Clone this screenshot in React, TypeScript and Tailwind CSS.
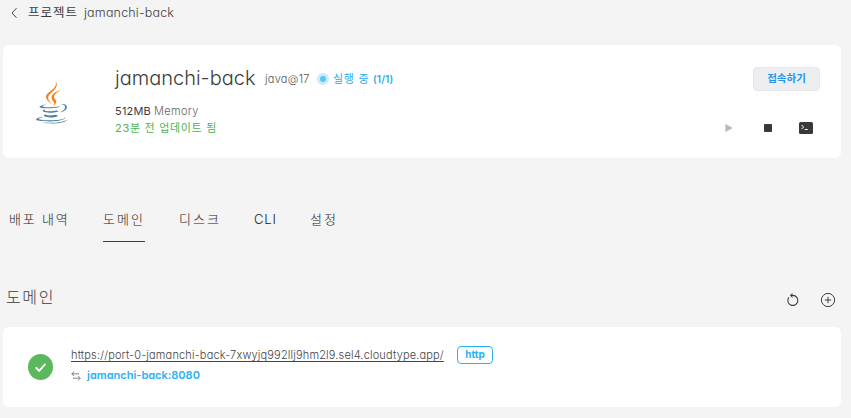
import React from "react";

const latin = "font-['Inter','Noto_Sans_CJK_KR',sans-serif] [font-feature-settings:'cv11']";

function JavaLogo() {
  return (
    <svg viewBox="0 0 128 128" className="h-[43px] w-[43px]">
      <g fill="#4f7f9f">
        <path d="M47.617 98.12s-4.767 2.774 3.397 3.71c9.892 1.13 14.947.968 25.845-1.092 0 0 2.871 1.795 6.873 3.351-24.439 10.47-55.308-.607-36.115-5.969zM44.629 84.455s-5.348 3.959 2.823 4.805c10.567 1.091 18.91 1.18 33.354-1.6 0 0 1.993 2.025 5.132 3.131-29.542 8.64-62.446.68-41.309-6.336z" />
        <path d="M102.123 108.229s3.529 2.91-3.888 5.159c-14.102 4.272-58.706 5.56-71.094.171-4.451-1.938 3.899-4.625 6.526-5.192 2.739-.593 4.303-.485 4.303-.485-4.953-3.487-32.013 6.85-13.743 9.815 49.821 8.076 90.817-3.637 77.896-9.468zM49.912 70.294s-22.686 5.389-8.033 7.348c6.188.828 18.518.638 30.011-.326 9.39-.789 18.813-2.474 18.813-2.474s-3.308 1.419-5.704 3.053c-23.042 6.061-67.544 3.238-54.731-2.958 10.832-5.239 19.644-4.643 19.644-4.643zM90.609 93.041c23.421-12.167 12.591-23.86 5.032-22.285-1.848.385-2.677.72-2.677.72s.688-1.079 2-1.543c14.953-5.255 26.451 15.503-4.823 23.725 0-.002.359-.327.468-.617z" />
        <path d="M52.214 126.021c22.476 1.437 57-.8 57.817-11.436 0 0-1.571 4.032-18.577 7.231-19.186 3.612-42.854 3.191-56.887.874 0 .001 2.875 2.381 17.647 3.331z" />
      </g>
      <g fill="#f58219">
        <path d="M69.802 61.271c6.025 6.935-1.58 13.17-1.58 13.17s15.289-7.891 8.269-17.777c-6.559-9.215-11.587-13.792 15.635-29.58 0 .001-42.731 10.67-22.324 34.187z" />
        <path d="M76.491 1.587S89.459 14.563 64.188 34.51c-20.266 16.006-4.621 25.13-.007 35.559-11.831-10.673-20.509-20.07-14.688-28.815C58.041 28.42 81.722 22.195 76.491 1.587z" />
      </g>
    </svg>
  );
}

function Tab({ label, className, active = false }: { label: string; className: string; active?: boolean }) {
  return (
    <div
      className={`h-[35px] border-b text-[13px] leading-[25px] ${active ? "border-[#3c3c3c]" : "border-transparent"} ${className}`}
    >
      {label}
    </div>
  );
}

export default function App() {
  return (
    <div className={`h-[418px] w-[851px] overflow-hidden bg-[#f4f4f4] whitespace-nowrap text-[#3c3c3c] ${latin}`}>
      <header className="flex h-[45px] items-start pl-[10px] pt-[3px] text-[12px] leading-[20px]">
        <svg viewBox="0 0 8 12" className="mt-[4px] h-[12px] w-[8px]" fill="none" stroke="#444" strokeWidth="1">
          <path d="M6.5 1.2 2 6l4.5 4.8" />
        </svg>
        <span className="ml-[10px] w-[56px] text-[12.5px] tracking-[1px]">프로젝트</span>
        <span className="text-[12.5px] font-light tracking-[0.18px]">jamanchi-back</span>
      </header>

      <section className="ml-[3px] flex h-[113px] w-[838px] rounded-[6px] bg-white">
        <div className="w-[112px] pl-[27px] pt-[36px]">
          <JavaLogo />
        </div>
        <div className="flex-1 pt-[17px]">
          <div className="flex h-[32px] items-center">
            <h1 className="w-[150px] text-[20px] font-light leading-[30px]">jamanchi-back</h1>
            <span className="mt-[3px] w-[52px] text-[11px] font-light tracking-[0.25px] text-[#555]">java@17</span>
            <span className="mt-px flex h-[12px] w-[12px] items-center justify-center rounded-full bg-[#c9ebfc]">
              <span className="h-[6px] w-[6px] rounded-full bg-[#5cc4f7]" />
            </span>
            <span className="ml-[4px] mt-[2px] w-[40px] text-[11px] tracking-[0.7px] text-[#27aef0]">실행 중</span>
            <span className="mt-[3px] text-[10px] font-semibold tracking-[0.1px] text-[#27aef0]">(1/1)</span>
          </div>
          <div className="mt-[9px] text-[11px] leading-[17px]">
            <span className="tracking-[0.2px]">512MB</span>{" "}
            <span className="font-light tracking-[0.3px] text-[#666]">Memory</span>
          </div>
          <div className="text-[11px] leading-[17px] tracking-[0.7px] text-[#4db452]">
            23분 전 업데이트 됨
          </div>
        </div>
        <div className="w-[120px] pt-[22px]">
          <button className="ml-[32px] block h-[24px] w-[67px] rounded-[4px] border border-[#e6e7ea] bg-[#edeef2] pb-px text-[10.5px] font-bold leading-[21px] text-[#2295ee]">
            접속하기
          </button>
          <div className="mt-[30px] flex h-[14px] items-center">
            <svg viewBox="0 0 8 8" className="ml-[4px] h-[8px] w-[8px]" fill="#b9b9b9">
              <path d="M.3 0 7.8 4 .3 8z" />
            </svg>
            <span className="ml-[31px] h-[8px] w-[8px] rounded-[1px] bg-[#393939]" />
            <svg viewBox="0 0 14 12" className="ml-[27px] h-[12px] w-[14px]" fill="none">
              <rect width="14" height="12" rx="1.5" fill="#393939" />
              <path d="m2.6 3 2 2-2 2M5.7 7.5h3" stroke="#fff" strokeWidth="1" />
            </svg>
          </div>
        </div>
      </section>

      <nav className="mt-[49px] flex h-[35px] pl-[9px] font-light text-[#222]">
        <Tab label="배포 내역" className="mr-[34px] w-[60px] tracking-[1.8px]" />
        <Tab label="도메인" className="mr-[34px] w-[42px] tracking-[2.1px]" active />
        <Tab label="디스크" className="mr-[33px] w-[42px] tracking-[2.1px]" />
        <Tab label="CLI" className="mr-[32px] w-[24px] tracking-[0.8px]" />
        <Tab label="설정" className="w-[28px] tracking-[2px]" />
      </nav>

      <div className="flex h-[85px] items-start pl-[6px] pt-[43px]">
        <h2 className="w-[780px] text-[16px] font-light leading-[24px] tracking-[1.6px]">도메인</h2>
        <svg viewBox="0 0 14 14" className="mt-[8px] h-[14px] w-[14px]" fill="none" stroke="#3c3c3c" strokeWidth="1.1">
          <path d="M2.9 4.3A5 5 0 1 0 7 2.4H5" />
          <path d="M6.4.5 4.2 2.4l2.2 2" fill="#3c3c3c" strokeWidth=".7" />
        </svg>
        <svg viewBox="0 0 16 16" className="ml-[20px] mt-[7px] h-[16px] w-[16px]" fill="none" stroke="#3c3c3c" strokeWidth="1">
          <circle cx="8" cy="8" r="6.6" />
          <path d="M8 4.8v6.4M4.8 8h6.4" />
        </svg>
      </div>

      <section className="ml-[3px] flex h-[80px] w-[838px] rounded-[6px] bg-white">
        <svg viewBox="0 0 26 26" className="ml-[25px] mt-[27px] h-[26px] w-[25px]" preserveAspectRatio="none">
          <circle cx="13" cy="13" r="13" fill="#5cb85c" />
          <path d="m8 13.4 3.6 3.5 6.5-7" fill="none" stroke="#fff" strokeWidth="2" />
        </svg>
        <div className="ml-[18px] pt-[18px]">
          <div className="flex h-[20px] items-center">
            <a className="w-[386px] text-[11px] font-light leading-[16px] tracking-[0.16px] text-[#444] underline underline-offset-[2px]">
              https://port-0-jamanchi-back-7xwyjq992llj9hm2l9.sel4.cloudtype.app/
            </a>
            <span className="h-[18px] w-[36px] rounded-[4px] border border-[#29b1f3] text-center text-[10px] font-bold leading-[15px] text-[#29b1f3]">
              http
            </span>
          </div>
          <div className="flex h-[20px] items-center">
            <svg viewBox="0 0 10 10" className="mt-px h-[10px] w-[10px]" fill="none" stroke="#777" strokeWidth=".9">
              <path d="M3.2 .5 .8 2.8h7.4M.8 2.8 3 5.1M9.2 7.2H1.8M7 4.9l2.3 2.3L7 9.5" />
            </svg>
            <span className="ml-[6px] text-[11px] font-semibold text-[#29b1f3]">jamanchi-back:8080</span>
          </div>
        </div>
      </section>
    </div>
  );
}
